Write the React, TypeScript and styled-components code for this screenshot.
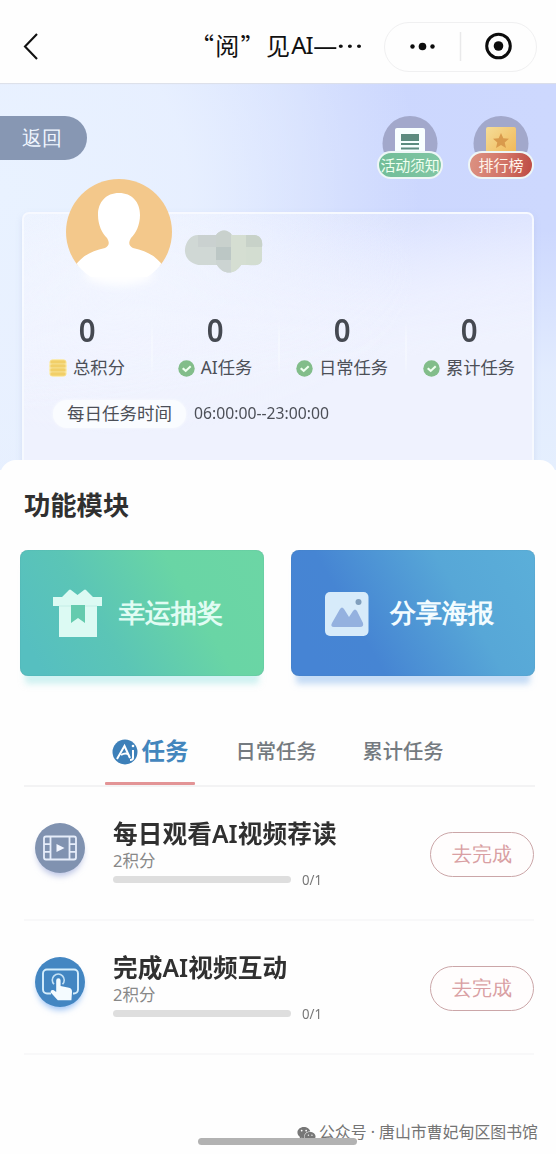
import React from 'react';
import styled, { createGlobalStyle } from 'styled-components';
import { FaWeixin } from 'react-icons/fa';

const Global = createGlobalStyle`
  * { box-sizing: border-box; }
  body { margin: 0; background: #fefefe; font-family: 'Noto Sans', 'Noto Sans CJK SC', sans-serif; }
`;

const Page = styled.main`
  width: 556px;
  height: 1154px;
  overflow: hidden;
  display: flex;
  flex-direction: column;
  background: #fefefe;
`;

const Text = styled.span<{ $size: number; $color?: string; $weight?: number; $gap?: number; $stretch?: number }>`
  display: inline-block;
  white-space: nowrap;
  line-height: 1;
  font-size: ${p => p.$size}px;
  color: ${p => p.$color ?? '#4c4f57'};
  font-weight: ${p => p.$weight ?? 400};
  letter-spacing: ${p => p.$gap ?? 0}px;
  transform: scaleX(${p => p.$stretch ?? 1});
  transform-origin: left center;
`;

const Header = styled.header`
  height: 83px;
  flex: none;
  display: flex;
  align-items: center;
  padding: 10px 19px 0 21px;
  background: #fefefe;
`;

const Title = styled.h1`
  margin: 0 0 3px 151px;
  width: 194px;
  display: flex;
  align-items: center;
  font: 400 24px/30px 'Noto Sans CJK SC', sans-serif;
  letter-spacing: 1.3px;
  color: #111;
  white-space: nowrap;
`;

const TitleLatin = styled.span`
  font-family: 'Noto Sans', sans-serif;
  font-size: 24px;
  letter-spacing: -1px;
`;

const TitleDash = styled.span`
  letter-spacing: -1.2px;
  font-weight: 500;
  transform: scaleX(1.14);
  transform-origin: left center;
`;

const Capsule = styled.div`
  width: 153px;
  height: 50px;
  flex: none;
  border: 1.5px solid #f0f0f1;
  border-radius: 25px;
`;

const Hero = styled.section`
  height: 387px;
  flex: none;
  box-shadow: inset 0 2px 1px -1px #dcdfe8;
  background:
    radial-gradient(ellipse 420px 420px at 0px 110px, #e9f2ff 0%, rgba(233, 241, 255, 0.9) 45%, rgba(233, 240, 255, 0) 100%),
    linear-gradient(180deg, rgba(232, 240, 254, 0) 38%, rgba(230, 239, 254, 0.85) 75%, #e5effe 100%),
    linear-gradient(90deg, #dbe6fe 0%, #ccd7fe 62%, #cdd8fe 100%);
`;

const HeroTop = styled.div`
  height: 129px;
  display: flex;
  align-items: flex-start;
  padding: 33px 22px 0 0;
`;

const Return = styled.button`
  width: 87px;
  height: 44px;
  padding: 0 0 0 22px;
  border: 0;
  border-radius: 0 22px 22px 0;
  background: #8797b3;
  display: flex;
  align-items: center;
  margin-right: auto;
`;

const Badge = styled.div`
  width: 66px;
  display: flex;
  flex-direction: column;
  align-items: center;
  margin-left: 25px;
`;

const BadgeLabel = styled.div<{ $bg: string }>`
  width: 66px;
  height: 28px;
  margin-top: -1px;
  border: 2px solid #eef6f6;
  border-radius: 14px;
  background: ${p => p.$bg};
  display: flex;
  align-items: center;
  justify-content: center;
`;

const Profile = styled.div`
  margin: 0 22px;
  height: 258px;
  border: 2px solid rgba(248, 251, 255, 0.85);
  border-bottom: 0;
  border-radius: 7px 7px 0 0;
  background:
    radial-gradient(ellipse 300px 160px at 90px 60px, rgba(243, 246, 255, 0.75), rgba(243, 246, 255, 0)),
    linear-gradient(172deg, rgba(238, 241, 255, 0.15), rgba(240, 242, 255, 0.85) 42%, #eff2fe 60%);
  box-shadow: 0 3px 6px rgba(160, 175, 215, 0.28);
`;

const Identity = styled.div`
  height: 99px;
  display: flex;
  padding-left: 41px;
`;

const Avatar = styled.svg`
  margin-top: -37px;
  flex: none;
`;

const Mosaic = styled.svg`
  margin: 16px 0 0 11px;
`;

const Stats = styled.div`
  display: grid;
  grid-template-columns: repeat(4, 127px);
  height: 85px;
`;

const Stat = styled.div`
  display: flex;
  flex-direction: column;
  align-items: center;
  gap: 11px;
  & + & {
    border-left: 2px solid;
    border-image: linear-gradient(180deg, transparent 10%, rgba(248, 251, 255, 0.5) 30%, rgba(248, 251, 255, 0.5) 55%, transparent 75%) 1;
  }
`;

const Number = styled.strong`
  font: 600 32px/34px 'Noto Sans', sans-serif;
  color: #454951;
  transform: scaleX(0.92);
`;

const StatLabel = styled.div`
  display: flex;
  align-items: center;
  gap: 6px;
  height: 20px;
  margin-right: 1px;
`;

const Schedule = styled.div`
  display: flex;
  align-items: center;
  gap: 8px;
  margin: 2px 0 0 29px;
`;

const ScheduleTime = styled.div`
  display: flex;
  margin-bottom: 3px;
`;

const SchedulePill = styled.div`
  width: 133px;
  height: 28px;
  border-radius: 14px;
  background: #fafcff;
  box-shadow: 0 0 3px #fafcff;
  display: flex;
  align-items: center;
  padding-left: 14px;
`;

const Sheet = styled.section`
  flex: 1;
  margin-top: -10px;
  border-radius: 16px 16px 0 0;
  background: #fefefe;
  display: flex;
  flex-direction: column;
  z-index: 1;
`;

const Heading = styled.h2`
  margin: 0;
  height: 90px;
  padding: 1px 0 0 24px;
  display: flex;
  align-items: center;
  font-size: 26px;
`;

const Modules = styled.div`
  display: flex;
  gap: 27px;
  padding-left: 20px;
`;

const Module = styled.button<{ $bg: string; $glow: string }>`
  width: 244px;
  height: 126px;
  border: 0;
  border-radius: 8px;
  padding: 0 0 0 33px;
  background: ${p => p.$bg};
  box-shadow: 0 13px 6px -5px ${p => p.$glow}, inset 0 0 1px rgba(70, 120, 140, 0.6);
  display: flex;
  align-items: center;
  gap: 17px;
`;

const Tabs = styled.nav`
  margin: 42px 21px 0 24px;
  height: 69px;
  border-bottom: 2px solid #f3f3f4;
  display: flex;
  padding-left: 81px;
`;

const Tab = styled.div<{ $active?: boolean; $left?: number }>`
  position: relative;
  width: ${p => (p.$active ? 90 : 82)}px;
  height: 67px;
  margin-left: ${p => p.$left ?? 0}px;
  display: flex;
  align-items: center;
  justify-content: center;
  gap: 4px;
  &::after {
    content: ${p => (p.$active ? "''" : 'none')};
    position: absolute;
    left: 0;
    right: 0;
    bottom: 0;
    height: 3px;
    border-radius: 1px;
    background: #e39496;
  }
`;

const Task = styled.article`
  height: 134px;
  margin: 0 22px 0 24px;
  border-bottom: 2px solid #f8f8f9;
  display: flex;
  align-items: flex-start;
`;

const TaskIcon = styled.svg`
  width: 60px;
  height: 66px;
  margin: 31px 0 0 6px;
  flex: none;
`;

const TaskBody = styled.div`
  width: 317px;
  padding: 35px 0 0 23px;
  display: flex;
  flex-direction: column;
`;

const Points = styled.div`
  display: flex;
  margin-top: 6px;
  height: 17px;
`;

const Progress = styled.div`
  display: flex;
  align-items: center;
  gap: 11px;
  height: 16px;
  margin-top: 2px;
`;

const Track = styled.div`
  width: 178px;
  height: 7px;
  border-radius: 4px;
  background: #dedede;
`;

const Action = styled.button`
  width: 104px;
  height: 45px;
  flex: none;
  margin: 45px 0 0 24px;
  padding: 0;
  border: 1.5px solid #cba6a8;
  border-radius: 23px;
  background: #fffdfd;
  display: flex;
  align-items: center;
  justify-content: center;
`;

const Footer = styled.footer`
  margin-top: auto;
  height: 29px;
  padding-right: 18px;
  display: flex;
  justify-content: flex-end;
  gap: 3px;
  color: #777;
`;

const HomeBar = styled.div`
  position: absolute;
  left: 198px;
  top: 1138px;
  width: 159px;
  height: 7px;
  border-radius: 4px;
  background: #b2b2b2;
  z-index: 2;
`;

const Coins = () => (
  <svg width="18" height="18" viewBox="0 0 18 18">
    <rect x="0" y="0" width="18" height="18" rx="5" fill="#fbf0c0" />
    {[1, 5, 9, 13].map(y => <rect key={y} x="1" y={y} width="16" height="4" rx="2" fill="#f1cf68" stroke="#f8e39a" strokeWidth=".7" />)}
  </svg>
);

const Check = () => (
  <svg width="17" height="17" viewBox="0 0 17 17">
    <circle cx="8.5" cy="8.5" r="8.2" fill="#82bd8a" />
    <path d="M4.7 8.2l3 2.700 5-4.600" fill="none" stroke="#effff0" strokeWidth="2.1" />
  </svg>
);

const stats = [
  { label: '总积分', icon: <Coins /> },
  { label: 'AI任务', icon: <Check /> },
  { label: '日常任务', icon: <Check /> },
  { label: '累计任务', icon: <Check /> },
];

const FilmIcon = () => (
  <TaskIcon viewBox="0 0 60 66">
    <defs><filter id="soft1" x="-30%" y="-30%" width="160%" height="160%"><feGaussianBlur stdDeviation="3" /></filter></defs>
    <circle cx="30" cy="35" r="23" fill="#b9c2e4" filter="url(#soft1)" />
    <circle cx="30" cy="30" r="25" fill="#8092b0" />
    <g fill="none" stroke="#e6edfa" strokeWidth="1.8">
      <rect x="14" y="18.500" width="32" height="23" rx="2" />
      <path d="M20.500 18.500v23M39.500 18.500v23M14 26.200h6.500M14 33.800h6.500M39.500 26.200H46M39.500 33.800H46" />
    </g>
    <path d="M26.500 26l8 4-8 4z" fill="#f2f6ff" />
  </TaskIcon>
);

const TouchIcon = () => (
  <TaskIcon viewBox="0 0 60 66">
    <defs><filter id="soft2" x="-30%" y="-30%" width="160%" height="160%"><feGaussianBlur stdDeviation="3" /></filter></defs>
    <circle cx="30" cy="35" r="23" fill="#9cc3f5" filter="url(#soft2)" />
    <circle cx="30" cy="30" r="25" fill="#4386c2" />
    <path d="M21 41.500h-4a4 4 0 0 1-4-4V21.500a4 4 0 0 1 4-4h27a4 4 0 0 1 4 4v16a4 4 0 0 1-4 4h-1" fill="none" stroke="#d5eefc" strokeWidth="1.900" />
    <path d="M24 32.300a6 6 0 1 1 8.500 0" fill="none" stroke="#c4e1f5" strokeWidth="1.600" />
    <path d="M26.200 28.500a2.200 2.200 0 0 1 4.400 0V34l8.400 1.800a4 4 0 0 1 3 4.200l-.6 8.300H27.800L21.200 41c-1.600-2 .6-4 2.600-2.700l2.400 1.700z" fill="#f4fbff" />
  </TaskIcon>
);

const tasks = [
  { title: '每日观看AI视频荐读', icon: <FilmIcon /> },
  { title: '完成AI视频互动', icon: <TouchIcon /> },
];

export default function App() {
  return (
    <Page>
      <Global />
      <Header>
        <svg width="18" height="28" viewBox="0 0 18 28"><path d="M16 1L4 13.500l12 12.500" fill="none" stroke="#111" strokeWidth="2.100" /></svg>
        <Title>“阅”见<TitleLatin>AI</TitleLatin><TitleDash>—…</TitleDash></Title>
        <Capsule>
          <svg width="150" height="47" viewBox="0 0 150 47">
            <g fill="#0c0c0c"><circle cx="27.500" cy="23.500" r="2.200" /><circle cx="37.500" cy="23.500" r="3.800" /><circle cx="47.500" cy="23.500" r="2.200" /></g>
            <path d="M75.500 9v29" stroke="#e9e9ea" strokeWidth="1.500" />
            <circle cx="113.500" cy="23" r="11.800" fill="none" stroke="#0c0c0c" strokeWidth="3" />
            <circle cx="113.500" cy="23" r="4.800" fill="#0c0c0c" />
          </svg>
        </Capsule>
      </Header>

      <Hero>
        <HeroTop>
          <Return><Text $size={20} $color="#f0f6ff">返回</Text></Return>
          <Badge>
            <svg width="56" height="36" viewBox="0 0 56 36">
              <circle cx="28" cy="27.500" r="27.500" fill="#a2a8cb" />
              <rect x="13" y="12" width="30" height="28" rx="2" fill="#f8ffff" />
              <path d="M19 18h18v7H19zM19 27h18v2H19zM19 31.500h18v2H19z" fill="#5d8c80" />
            </svg>
            <BadgeLabel $bg="linear-gradient(90deg,#72bd98,#80c6a4)"><Text $size={15} $color="#efffef" $gap={-0.3}>活动须知</Text></BadgeLabel>
          </Badge>
          <Badge>
            <svg width="56" height="36" viewBox="0 0 56 36">
              <defs><linearGradient id="gold" x1="0" y1="0" x2="1" y2="1"><stop stopColor="#f5dd98" /><stop offset="1" stopColor="#f0b553" /></linearGradient></defs>
              <circle cx="28" cy="27.500" r="27.500" fill="#a2a8cb" />
              <rect x="13" y="11" width="30" height="30" rx="2" fill="url(#gold)" />
              <path d="M28 17l2.300 5.300 5.700.5-4.300 3.700 1.300 5.600-5-3-5 3 1.300-5.600-4.300-3.700 5.700-.5z" fill="#d99a4c" />
            </svg>
            <BadgeLabel $bg="linear-gradient(100deg,#dc9282,#d27467 55%,#bd4a42)"><Text $size={15} $color="#fff4ea">排行榜</Text></BadgeLabel>
          </Badge>
        </HeroTop>

        <Profile>
          <Identity>
            <Avatar width="108" height="124" viewBox="0 0 108 124">
              <defs>
                <clipPath id="face"><circle cx="54" cy="55" r="53" /></clipPath>
                <filter id="haze" x="-40%" y="-60%" width="180%" height="220%"><feGaussianBlur stdDeviation="5" /></filter>
              </defs>
              <ellipse cx="54" cy="97" rx="34" ry="11" fill="#fff" filter="url(#haze)" />
              <g clipPath="url(#face)">
                <path d="M0 0h108v89H0z" fill="#f3c88b" />
                <path d="M54 16c13 0 21 9 21 22 0 10-4 18-9 23-3 5-2 8 2 10 14 3 23 8 30 18l-8 11H18l-8-11c7-10 16-15 30-18 4-2 5-5 2-10-5-5-9-13-9-23 0-13 8-22 21-22z" fill="#fff" />
              </g>
            </Avatar>
            <Mosaic width="79" height="45" viewBox="0 0 79 45">
              <defs><clipPath id="smudge"><path d="M14 5h18c4-6 12-6 16 0h21c8 0 10 6 9 12v12c0 6-6 7-14 6h-7c-6 10-18 10-24 0H19C9 36 0 29 1 19 2 11 7 5 14 5z" /></clipPath></defs>
              <g clipPath="url(#smudge)">
                <path d="M0 0h79v45H0z" fill="#d0d8d5" />
                <path d="M14 5h18v12H14z" fill="#cad1d0" />
                <path d="M32 0h15v17H32z" fill="#c9d1cd" />
                <path d="M32 17h15v13H32z" fill="#bcc7c5" />
                <path d="M47 0h15v45H47z" fill="#d5ded2" />
                <path d="M62 5h17v12H62z" fill="#c8d2c9" />
                <path d="M62 17h17v18H62z" fill="#d3ddd1" />
                <path d="M32 30h15v15H32z" fill="#ccd4d2" />
              </g>
            </Mosaic>
          </Identity>
          <Stats>
            {stats.map(s => (
              <Stat key={s.label}>
                <Number>0</Number>
                <StatLabel>{s.icon}<Text $size={17.3}>{s.label}</Text></StatLabel>
              </Stat>
            ))}
          </Stats>
          <Schedule>
            <SchedulePill><Text $size={17.5}>每日任务时间</Text></SchedulePill>
            <ScheduleTime><Text $size={17} $stretch={0.925}>06:00:00--23:00:00</Text></ScheduleTime>
          </Schedule>
        </Profile>
      </Hero>

      <Sheet>
        <Heading><Text $size={26.3} $weight={700} $color="#303030">功能模块</Text></Heading>
        <Modules>
          <Module $bg="linear-gradient(60deg,#56bfc0 8%,#5bc5b6 35%,#69d5a5 68%,#6cd6a5)" $glow="rgba(170,232,232,.55)">
            <svg width="49" height="49" viewBox="0 0 49 49">
              <path d="M0 8h9l7-7q1-1 2 0l6.500 5L31 1q1-1 2 0l7 7h9v9h-5v31H6V17H0z" fill="#dcfaf3" />
              <path d="M6 17h38" stroke="#c4eee6" />
              <path d="M18 16h14v18l-7-5-7 5z" fill="#65cbae" />
            </svg>
            <Text $size={26.3} $weight={600} $color="#e1fcf3">幸运抽奖</Text>
          </Module>
          <Module $bg="linear-gradient(60deg,#4684d4 10%,#4685d3 30%,#57a7d7 68%,#5bafd9)" $glow="rgba(150,192,239,.55)">
            <svg width="49" height="49" viewBox="0 0 49 49">
              <rect x="1" y="3" width="43.500" height="44" rx="5" fill="#d7ebfa" />
              <path d="M8 34l8-14q2-3 4 0l5 8 4-6q2-3 4 0l6 12q1 4-3 4H10q-4 0-2-4z" fill="#94b1df" />
              <circle cx="34.500" cy="13" r="3" fill="#819fbd" />
            </svg>
            <Text $size={26.3} $weight={600} $color="#f3fcff">分享海报</Text>
          </Module>
        </Modules>
        <Tabs>
          <Tab $active>
            <svg width="26" height="26" viewBox="0 0 26 26">
              <circle cx="13" cy="13" r="12.500" fill="#3d80b9" />
              <path d="M5 20l7.500-13L18 19M9 16q5-3 8 0M21 11v8q0 2-3 2" fill="none" stroke="#fff" strokeWidth="2" />
              <circle cx="21" cy="7" r="1.300" fill="#fff" />
            </svg>
            <Text $size={23.5} $weight={600} $color="#4386bd">任务</Text>
          </Tab>
          <Tab $left={40}><Text $size={20.3} $weight={500} $color="#747a80">日常任务</Text></Tab>
          <Tab $left={45}><Text $size={20.3} $weight={500} $color="#747a80">累计任务</Text></Tab>
        </Tabs>
        {tasks.map(t => (
          <Task key={t.title}>
            {t.icon}
            <TaskBody>
              <Text $size={24.500} $weight={600} $color="#303030" $gap={0.1} $stretch={1.005}>{t.title}</Text>
              <Points><Text $size={16.5} $color="#888">2积分</Text></Points>
              <Progress><Track /><Text $size={15} $color="#777" $stretch={0.88}>0/1</Text></Progress>
            </TaskBody>
            <Action><Text $size={20.3} $color="#d99fa3">去完成</Text></Action>
          </Task>
        ))}
        <Footer>
          <FaWeixin size={19} />
          <Text $size={15.9} $color="#747474">公众号 · 唐山市曹妃甸区图书馆</Text>
        </Footer>
      </Sheet>
      <HomeBar />
    </Page>
  );
}
